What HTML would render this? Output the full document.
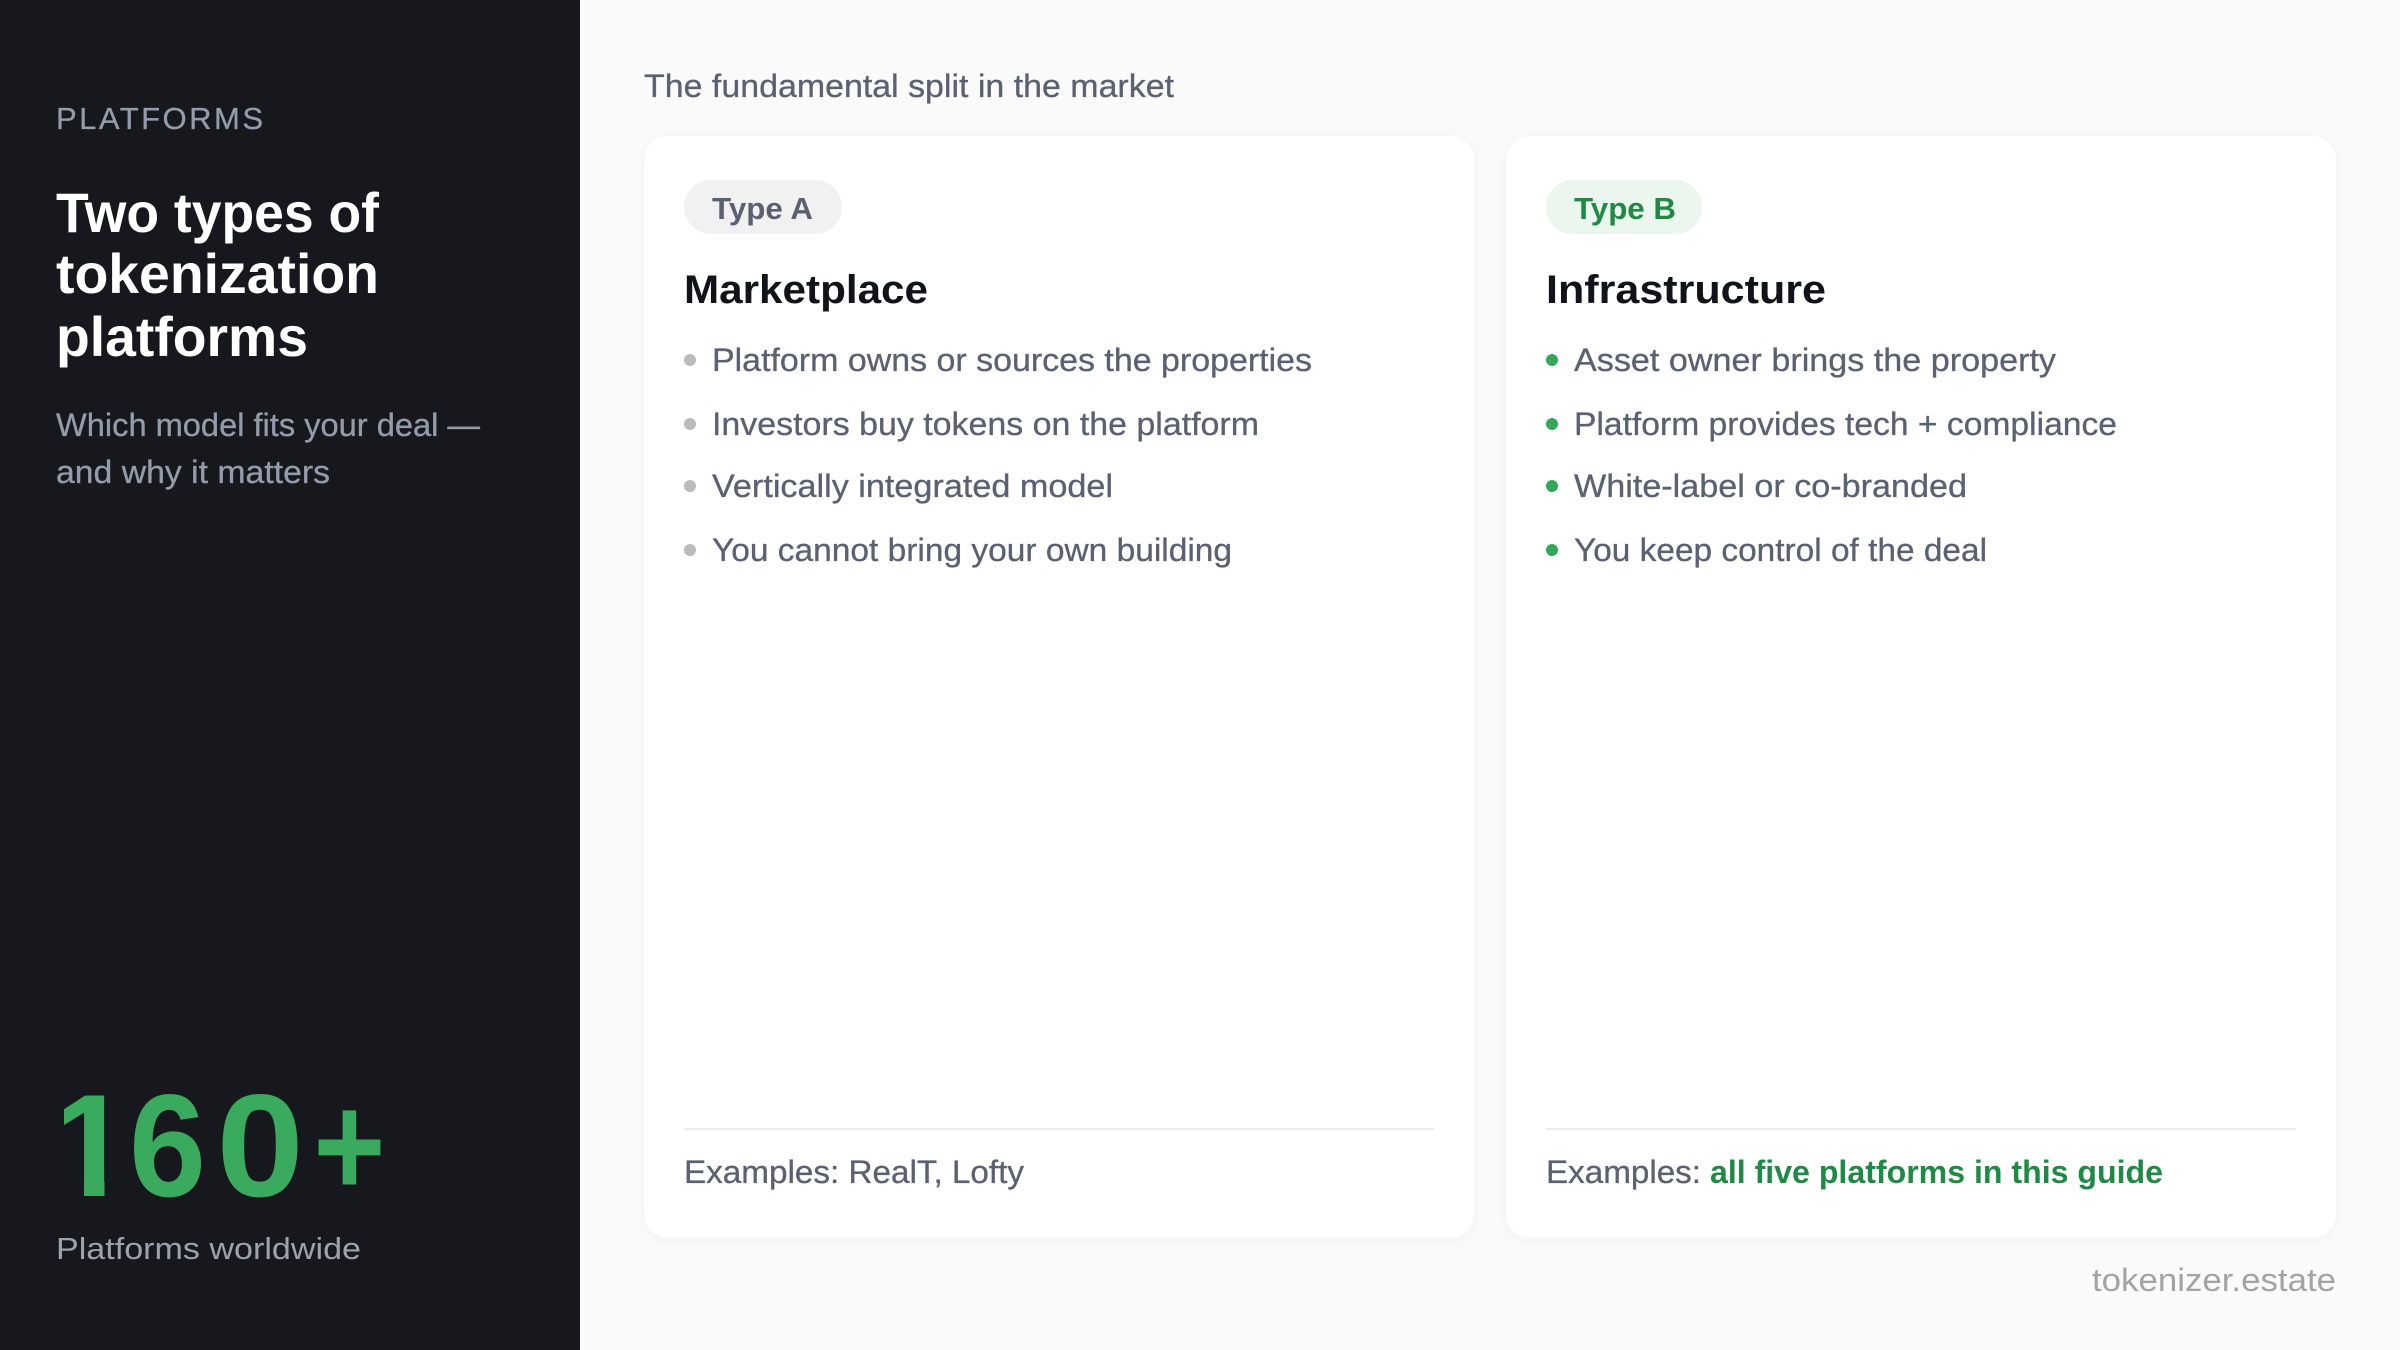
<!DOCTYPE html>
<html lang="en">
<head>
<meta charset="utf-8">
<title>Two types of tokenization platforms</title>
<style>
html,body{margin:0;padding:0;width:2400px;height:1350px;overflow:hidden;background:#fafafa}
.side{position:absolute;left:0;top:0;width:580px;height:1350px;background:#16181d}
.card{position:absolute;top:136px;width:830px;height:1102px;background:#fff;border-radius:24px;box-shadow:0 2px 12px rgba(0,0,0,.04)}
svg{position:absolute;left:0;top:0}
text{font-family:"Liberation Sans",Arial,sans-serif;white-space:pre}
.l{font-size:32px;fill:#5b6170;stroke:#5b6170;stroke-width:.3px}
.b{font-weight:700}
.s{stroke:#949cab;stroke-width:.3px}
</style>
</head>
<body>
<div class="side"></div>
<div class="card" style="left:644px"></div>
<div class="card" style="left:1506px"></div>
<svg width="2400" height="1350" viewBox="0 0 2400 1350" xmlns="http://www.w3.org/2000/svg">
  <text class="s" x="56" y="129" font-size="31" fill="#949cab" textLength="207" lengthAdjust="spacing">PLATFORMS</text>
  <text class="b" x="56" y="232" font-size="56" fill="#fff" textLength="323" lengthAdjust="spacingAndGlyphs">Two types of</text>
  <text class="b" x="56" y="293" font-size="56" fill="#fff" textLength="323" lengthAdjust="spacingAndGlyphs">tokenization</text>
  <text class="b" x="56" y="356" font-size="56" fill="#fff" textLength="252" lengthAdjust="spacingAndGlyphs">platforms</text>
  <text class="s" x="56" y="436" font-size="32" fill="#949cab" textLength="424" lengthAdjust="spacingAndGlyphs">Which model fits your deal —</text>
  <text class="s" x="56" y="483" font-size="32" fill="#949cab" textLength="274" lengthAdjust="spacingAndGlyphs">and why it matters</text>

  <text class="b" x="50" y="1196" font-size="146" fill="#3aaa5e">1</text>
  <rect x="40" y="1181" width="44" height="20" fill="#16181d"/>
  <rect x="104.5" y="1181" width="24" height="20" fill="#16181d"/>
  <rect x="40" y="1085" width="24" height="100" fill="#16181d"/>
  <text class="b" x="129" y="1196" font-size="146" fill="#3aaa5e" textLength="77" lengthAdjust="spacingAndGlyphs">6</text>
  <text class="b" x="216.4" y="1196" font-size="146" fill="#3aaa5e" textLength="87.5" lengthAdjust="spacingAndGlyphs">0</text>
  <text class="b" x="313.4" y="1196" font-size="146" fill="#3aaa5e" textLength="72" lengthAdjust="spacingAndGlyphs">+</text>
  <text x="56" y="1259" font-size="31" fill="#9ca3af" textLength="305" lengthAdjust="spacingAndGlyphs">Platforms worldwide</text>

  <text class="l" x="644" y="97" textLength="530" lengthAdjust="spacingAndGlyphs">The fundamental split in the market</text>

  <rect x="684" y="180" width="158" height="54" rx="27" fill="#f1f1f2"/>
  <text class="b" x="712" y="219" font-size="31" fill="#5b6170" textLength="101" lengthAdjust="spacingAndGlyphs">Type A</text>
  <text class="b" x="684" y="303" font-size="40" fill="#111318" textLength="244" lengthAdjust="spacingAndGlyphs">Marketplace</text>
  <circle cx="690" cy="360" r="6" fill="#bcbcbc"/>
  <circle cx="690" cy="424" r="6" fill="#bcbcbc"/>
  <circle cx="690" cy="486" r="6" fill="#bcbcbc"/>
  <circle cx="690" cy="550" r="6" fill="#bcbcbc"/>
  <text class="l" x="712" y="371" textLength="600" lengthAdjust="spacingAndGlyphs">Platform owns or sources the properties</text>
  <text class="l" x="712" y="435" textLength="547" lengthAdjust="spacingAndGlyphs">Investors buy tokens on the platform</text>
  <text class="l" x="712" y="497" textLength="401" lengthAdjust="spacingAndGlyphs">Vertically integrated model</text>
  <text class="l" x="712" y="561" textLength="520" lengthAdjust="spacingAndGlyphs">You cannot bring your own building</text>
  <rect x="684" y="1128" width="750" height="2" fill="#ebebeb"/>
  <text class="l" x="684" y="1183" textLength="340" lengthAdjust="spacingAndGlyphs">Examples: RealT, Lofty</text>

  <rect x="1546" y="180" width="156" height="54" rx="27" fill="#ebf6ef"/>
  <text class="b" x="1574" y="219" font-size="31" fill="#1f8a45" textLength="102" lengthAdjust="spacingAndGlyphs">Type B</text>
  <text class="b" x="1546" y="303" font-size="40" fill="#111318" textLength="280" lengthAdjust="spacingAndGlyphs">Infrastructure</text>
  <circle cx="1552" cy="360" r="6" fill="#34a85a"/>
  <circle cx="1552" cy="424" r="6" fill="#34a85a"/>
  <circle cx="1552" cy="486" r="6" fill="#34a85a"/>
  <circle cx="1552" cy="550" r="6" fill="#34a85a"/>
  <text class="l" x="1574" y="371" textLength="482" lengthAdjust="spacingAndGlyphs">Asset owner brings the property</text>
  <text class="l" x="1574" y="435" textLength="543" lengthAdjust="spacingAndGlyphs">Platform provides tech + compliance</text>
  <text class="l" x="1574" y="497" textLength="393" lengthAdjust="spacingAndGlyphs">White-label or co-branded</text>
  <text class="l" x="1574" y="561" textLength="413" lengthAdjust="spacingAndGlyphs">You keep control of the deal</text>
  <rect x="1546" y="1128" width="750" height="2" fill="#ebebeb"/>
  <text class="l" x="1546" y="1183" textLength="155" lengthAdjust="spacingAndGlyphs">Examples:</text>
  <text class="b" x="1710" y="1183" font-size="32" fill="#1f8a45" textLength="453" lengthAdjust="spacingAndGlyphs">all five platforms in this guide</text>

  <text x="2092" y="1291" font-size="32" fill="#a3a3a3" textLength="244" lengthAdjust="spacingAndGlyphs">tokenizer.estate</text>
</svg>
</body>
</html>
